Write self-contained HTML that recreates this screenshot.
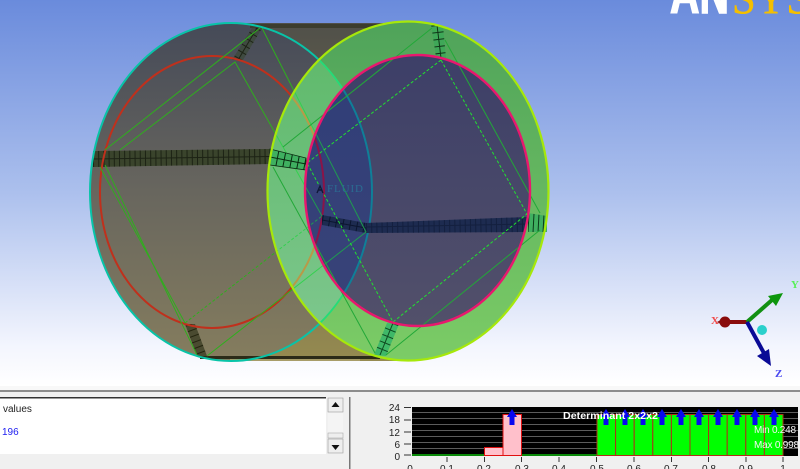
<!DOCTYPE html>
<html><head><meta charset="utf-8"><style>
html,body{margin:0;padding:0;width:800px;height:469px;overflow:hidden;background:#f0f0f0}
svg{display:block}
text{font-family:"Liberation Sans",sans-serif}
</style></head><body>
<svg width="800" height="469" viewBox="0 0 800 469" xmlns="http://www.w3.org/2000/svg">
<defs>
<linearGradient id="bg" x1="0" y1="0" x2="0" y2="1"><stop offset="0" stop-color="#6a8bdc"/><stop offset=".5" stop-color="#acc0ed"/><stop offset=".9" stop-color="#f4f6fe"/><stop offset="1" stop-color="#fff"/></linearGradient>
<linearGradient id="body" x1="0" y1="0" x2="0" y2="1"><stop offset="0" stop-color="#50504a"/><stop offset="1" stop-color="#958a50"/></linearGradient>
<linearGradient id="disc" x1="0" y1="0" x2="0" y2="1"><stop offset="0" stop-color="#454a58"/><stop offset=".5" stop-color="#68665e"/><stop offset="1" stop-color="#857d5e"/></linearGradient>
<linearGradient id="ann" x1="0" y1="0" x2="0" y2="1"><stop offset="0" stop-color="#4fa35a"/><stop offset="1" stop-color="#7ccc66"/></linearGradient>
<linearGradient id="ann2" x1="0" y1="0" x2="0" y2="1"><stop offset="0" stop-color="#5cb868"/><stop offset="1" stop-color="#80c890"/></linearGradient>
<linearGradient id="hole" x1="0" y1="0" x2="0" y2="1"><stop offset="0" stop-color="#3d3f68"/><stop offset="1" stop-color="#52506a"/></linearGradient>
<linearGradient id="hole2" x1="0" y1="0" x2="0" y2="1"><stop offset="0" stop-color="#2f3d78"/><stop offset="1" stop-color="#3a4478"/></linearGradient>
<clipPath id="backc"><ellipse cx="231" cy="192" rx="141" ry="169"/></clipPath>
<clipPath id="holec"><ellipse cx="417.500" cy="190.500" rx="112.500" ry="135.500"/></clipPath>
<clipPath id="annc"><path clip-rule="evenodd" d="M267 191a141 170 0 1 0 282 0a141 170 0 1 0-282 0ZM305 190.500a112.500 135.500 0 1 0 225 0a112.500 135.500 0 1 0-225 0Z"/></clipPath>
<clipPath id="s1"><polygon points="93,151 270,149 270,164 93,167"/></clipPath>
<clipPath id="s2"><polygon points="252,28 262,28 243,60 232,60"/></clipPath>
<clipPath id="s3"><polygon points="185,324 195,324 207,356 197,356"/></clipPath>
<clipPath id="s4"><polygon points="270,149 306,158 306,170 270,165"/></clipPath>
<clipPath id="s5"><polygon points="431,24 443,26 446,58 436,57"/></clipPath>
<clipPath id="s6"><polygon points="387,323 399,324 386,356 374,355"/></clipPath>
<clipPath id="s7"><polygon points="528,213 547,216 547,232 528,232"/></clipPath>
<clipPath id="s8"><polygon points="322,215 366,223 527,217 527,232 366,233 322,225"/></clipPath>
<g id="bd" fill="none">
<polyline points="105,150 260,28"/><polyline points="262,28 366,232 207,356"/><polyline points="105,165 197,355"/>
<polyline points="120,150 235,62 322,216"/><polyline points="100,167 185,323"/>
</g>
<g id="bdd" fill="none" stroke-dasharray="3 2"><polyline points="185,323 322,216"/></g>
<ellipse id="re" cx="212" cy="192" rx="112" ry="136" fill="none"/>
<ellipse id="te" cx="231" cy="192" rx="141" ry="169" fill="none"/>
</defs>
<rect width="800" height="386" fill="url(#bg)"/>
<!-- logo -->
<text x="670" y="13" font-size="58" font-weight="bold" fill="#fff" stroke="#fff" stroke-width="1.500" textLength="59" lengthAdjust="spacingAndGlyphs">AN</text>
<text x="732" y="13" font-size="44" fill="#f4bf00" stroke="#f4bf00" stroke-width=".5" style="font-family:'Liberation Serif',serif" textLength="78" lengthAdjust="spacingAndGlyphs">SYS</text>
<!-- cylinder body -->
<rect x="231" y="23" width="177" height="338" fill="url(#body)"/>
<ellipse cx="231" cy="192" rx="141" ry="169" fill="url(#disc)"/>
<rect x="250" y="24" width="145" height="4" fill="#3c3d2e"/>
<rect x="200" y="356" width="180" height="3" fill="#2c2b18"/>
<rect x="230" y="359" width="130" height="2" fill="#a79c68"/>
<!-- back strips -->
<g clip-path="url(#s1)"><rect x="90" y="145" width="185" height="25" fill="#3a442c"/>
<line x1="93" y1="159" x2="270" y2="157" stroke="#1d2315" stroke-width="20" stroke-dasharray="1 4.200"/>
<line x1="93" y1="159" x2="270" y2="156.500" stroke="#1d2315" stroke-width="1"/></g>
<g clip-path="url(#s2)"><rect x="225" y="25" width="40" height="40" fill="#3f4a40"/>
<line x1="257" y1="28" x2="238" y2="60" stroke="#1d2315" stroke-width="1"/>
<line x1="257" y1="28" x2="238" y2="60" stroke="#1d2315" stroke-width="18" stroke-dasharray="1 6"/></g>
<g clip-path="url(#s3)"><rect x="180" y="320" width="30" height="40" fill="#4a4a30"/>
<line x1="190" y1="324" x2="202" y2="356" stroke="#25250f" stroke-width="18" stroke-dasharray="1 5"/></g>
<!-- back ellipses and lines -->
<use href="#re" stroke="#c0301c" stroke-width="2"/>
<use href="#bd" stroke="#2fae1e" stroke-width="1"/>
<use href="#bdd" stroke="#2fae1e" stroke-width="1"/>
<use href="#te" stroke="#08c4a8" stroke-width="2"/>
<!-- front annulus -->
<ellipse cx="408" cy="191" rx="141" ry="170" fill="url(#ann)"/>
<g clip-path="url(#backc)"><ellipse cx="408" cy="191" rx="141" ry="170" fill="url(#ann2)"/></g>
<!-- hole -->
<ellipse cx="417.500" cy="190.500" rx="112.500" ry="135.500" fill="url(#hole)"/>
<g clip-path="url(#holec)">
<ellipse cx="231" cy="192" rx="141" ry="169" fill="url(#hole2)"/>
<use href="#te" stroke="#0f7f98" stroke-width="2"/>
<use href="#re" stroke="#8a1448" stroke-width="2"/>
<g clip-path="url(#s8)"><rect x="320" y="210" width="210" height="28" fill="#1d2b50"/>
<line x1="322" y1="220" x2="366" y2="228" stroke="#0c1630" stroke-width="22" stroke-dasharray="1 6"/>
<line x1="366" y1="227" x2="527" y2="224" stroke="#14203f" stroke-width="22" stroke-dasharray="1 4.200"/>
<line x1="322" y1="220" x2="366" y2="228" stroke="#0c1630"/><line x1="366" y1="227" x2="527" y2="224" stroke="#14203f"/></g>
<use href="#bd" stroke="#1f9a50" stroke-width="1"/>
<use href="#bdd" stroke="#1f9a50" stroke-width="1"/>
</g>
<!-- back geometry through annulus -->
<g clip-path="url(#annc)">
<use href="#re" stroke="#b89a48" stroke-width="2"/>
<use href="#te" stroke="#24dc78" stroke-width="1.800"/>
<use href="#bd" stroke="#35d050" stroke-width="1"/>
<use href="#bdd" stroke="#35d050" stroke-width="1"/>
</g>
<!-- front strips -->
<g clip-path="url(#s4)"><rect x="265" y="145" width="45" height="30" fill="#3fb060"/>
<line x1="270" y1="157" x2="306" y2="164" stroke="#0a2a10" stroke-width="1"/>
<line x1="270" y1="157" x2="306" y2="164" stroke="#0a2a10" stroke-width="24" stroke-dasharray="1 6"/></g>
<polygon points="270,149 306,158 306,170 270,165" fill="none" stroke="#0a2a10" stroke-width=".8"/>
<g clip-path="url(#s5)"><rect x="425" y="20" width="25" height="42" fill="#3fa858"/>
<line x1="437" y1="25" x2="441" y2="58" stroke="#0f3316" stroke-width="1"/>
<line x1="437" y1="25" x2="441" y2="58" stroke="#0f3316" stroke-width="20" stroke-dasharray="1 6"/></g>
<g clip-path="url(#s6)"><rect x="370" y="320" width="32" height="40" fill="#3fb868"/>
<line x1="393" y1="323" x2="380" y2="355" stroke="#0f4a20" stroke-width="1"/>
<line x1="393" y1="323" x2="380" y2="355" stroke="#0f4a20" stroke-width="20" stroke-dasharray="1 6"/></g>
<g clip-path="url(#s7)"><rect x="525" y="210" width="25" height="25" fill="#3fb060"/>
<line x1="528" y1="223" x2="547" y2="224" stroke="#0a3a18" stroke-width="22" stroke-dasharray="1 4"/></g>
<!-- front lines -->
<g fill="none" stroke="#22a838" stroke-width="1">
<polyline points="432,28 283,147"/><polyline points="273,167 375,353"/><polyline points="386,355 540,230"/><polyline points="445,40 540,213"/>
</g>
<g fill="none" stroke="#22e030" stroke-width="1" stroke-dasharray="3 2">
<polygon points="441,60 307,163 393,322 527,214"/>
</g>
<!-- rims -->
<ellipse cx="417.500" cy="190.500" rx="112.500" ry="135.500" fill="none" stroke="#e8186e" stroke-width="2.400"/>
<ellipse cx="408" cy="191" rx="140.500" ry="169.500" fill="none" stroke="#a6e80a" stroke-width="2.200"/>
<!-- FLUID -->
<text x="327" y="192" font-size="11" fill="#2a6c92" style="font-family:'Liberation Serif',serif" textLength="36">FLUID</text>
<path d="M317 193 L320 186 L323 193 M318 190 L322 190" stroke="#101838" stroke-width="1.400" fill="none"/>
<!-- triad -->
<line x1="747" y1="322" x2="725" y2="322" stroke="#8a0c0c" stroke-width="4"/>
<circle cx="725" cy="322" r="5.500" fill="#8a0c0c"/><polygon points="717,322 726,317 726,327" fill="#8a0c0c"/>
<line x1="747" y1="322" x2="772" y2="300" stroke="#129012" stroke-width="4"/>
<polygon points="783,293 768,296 776,306" fill="#0d960d"/>
<line x1="747" y1="322" x2="765" y2="355" stroke="#0a0a96" stroke-width="4"/>
<polygon points="771,366 757,356 769,349" fill="#0a0a96"/>
<circle cx="762" cy="330" r="5" fill="#2bd0cc"/>
<text x="711" y="324" font-size="11" font-weight="bold" fill="#f04a4a" style="font-family:'Liberation Serif',serif">X</text>
<text x="791" y="288" font-size="11" font-weight="bold" fill="#58f058" style="font-family:'Liberation Serif',serif">Y</text>
<text x="775" y="377" font-size="11" font-weight="bold" fill="#4a4af0" style="font-family:'Liberation Serif',serif">Z</text>
<!-- bottom panel -->
<rect y="386" width="800" height="83" fill="#f0f0f0"/>
<rect y="386" width="800" height="4" fill="#f8f8f8"/>
<rect y="390" width="800" height="2" fill="#8c8c8c"/>
<rect y="397" width="326" height="57" fill="#fff"/>
<rect y="397" width="326" height="1.500" fill="#333"/>
<text x="3" y="412" font-size="10" fill="#222">values</text>
<text x="2" y="435" font-size="10" fill="#1c1cf0">196</text>
<rect x="328" y="397" width="15" height="57" fill="#f4f4f4"/>
<rect x="328" y="398" width="15" height="14" fill="#eee" stroke="#999" stroke-width=".6"/>
<polygon points="335.500,402 331.500,407 339.500,407" fill="#111"/>
<rect x="328" y="433" width="15" height="5" fill="#eee" stroke="#aaa" stroke-width=".6"/>
<rect x="328" y="439" width="15" height="14" fill="#eee" stroke="#999" stroke-width=".6"/>
<polygon points="331.500,445 339.500,445 335.500,450" fill="#111"/>
<rect x="349" y="397" width="1.500" height="72" fill="#777"/>
<g font-size="10" fill="#222" text-anchor="end">
<text x="400" y="411">24</text><text x="400" y="423">18</text><text x="400" y="436">12</text><text x="400" y="448">6</text><text x="400" y="460">0</text>
</g>
<g stroke="#333" stroke-width="1">
<line x1="404" y1="407.500" x2="411" y2="407.500"/><line x1="404" y1="420" x2="411" y2="420"/><line x1="404" y1="432" x2="411" y2="432"/><line x1="404" y1="444" x2="411" y2="444"/><line x1="404" y1="455" x2="411" y2="455"/>
</g>
<!-- histogram -->
<rect x="412" y="407" width="386" height="49" fill="#000"/>
<g stroke="#5c5c5c" stroke-width="1">
<line x1="412" y1="412.500" x2="798" y2="412.500"/><line x1="412" y1="418.500" x2="798" y2="418.500"/><line x1="412" y1="424.500" x2="798" y2="424.500"/><line x1="412" y1="430.500" x2="798" y2="430.500"/><line x1="412" y1="436.500" x2="798" y2="436.500"/><line x1="412" y1="442.500" x2="798" y2="442.500"/><line x1="412" y1="448.500" x2="798" y2="448.500"/>
</g>
<rect x="412" y="454" width="186" height="2" fill="#0a8a0a"/>
<g stroke="#e01010" stroke-width="1">
<rect x="484.500" y="447.500" width="18.500" height="8" fill="#ffc0cb"/>
<rect x="503" y="414.500" width="18.500" height="41" fill="#ffc0cb"/>
</g>
<g stroke="#b03018" stroke-width="1" fill="#00ff00">
<rect x="597.000" y="414.500" width="18.600" height="41"/><rect x="615.600" y="414.500" width="18.600" height="41"/><rect x="634.200" y="414.500" width="18.600" height="41"/><rect x="652.800" y="414.500" width="18.600" height="41"/><rect x="671.400" y="414.500" width="18.600" height="41"/><rect x="690.000" y="414.500" width="18.600" height="41"/><rect x="708.600" y="414.500" width="18.600" height="41"/><rect x="727.200" y="414.500" width="18.600" height="41"/><rect x="745.800" y="414.500" width="18.600" height="41"/><rect x="764.400" y="414.500" width="18.600" height="41"/>
</g>
<g fill="#0808f0">
<path d="M512 409 l5 8 h-2.500 v8 h-5 v-8 h-2.500 z"/>
<path d="M606 409 l5 8 h-2.500 v8 h-5 v-8 h-2.500 z"/><path d="M625 409 l5 8 h-2.500 v8 h-5 v-8 h-2.500 z"/><path d="M643 409 l5 8 h-2.500 v8 h-5 v-8 h-2.500 z"/><path d="M662 409 l5 8 h-2.500 v8 h-5 v-8 h-2.500 z"/><path d="M681 409 l5 8 h-2.500 v8 h-5 v-8 h-2.500 z"/><path d="M699 409 l5 8 h-2.500 v8 h-5 v-8 h-2.500 z"/><path d="M718 409 l5 8 h-2.500 v8 h-5 v-8 h-2.500 z"/><path d="M737 409 l5 8 h-2.500 v8 h-5 v-8 h-2.500 z"/><path d="M755 409 l5 8 h-2.500 v8 h-5 v-8 h-2.500 z"/><path d="M774 409 l5 8 h-2.500 v8 h-5 v-8 h-2.500 z"/>
</g>
<text x="563" y="419" font-size="10" font-weight="bold" fill="#fff" textLength="95" lengthAdjust="spacingAndGlyphs">Determinant 2x2x2</text>
<text x="754" y="433" font-size="10" fill="#f4f4f4" textLength="42">Min 0.248</text>
<text x="754" y="448" font-size="10" fill="#f4f4f4" textLength="45">Max 0.998</text>
<!-- x axis -->
<g stroke="#333" stroke-width="1">
<line x1="447" y1="457" x2="447" y2="462"/><line x1="484.500" y1="457" x2="484.500" y2="462"/><line x1="521.500" y1="457" x2="521.500" y2="462"/><line x1="559" y1="457" x2="559" y2="462"/><line x1="596.500" y1="457" x2="596.500" y2="462"/><line x1="634" y1="457" x2="634" y2="462"/><line x1="671.500" y1="457" x2="671.500" y2="462"/><line x1="708.500" y1="457" x2="708.500" y2="462"/><line x1="746" y1="457" x2="746" y2="462"/><line x1="783" y1="457" x2="783" y2="462"/>
</g>
<g font-size="10" fill="#222" text-anchor="middle">
<text x="410" y="472">0</text><text x="447" y="472">0.1</text><text x="484" y="472">0.2</text><text x="522" y="472">0.3</text><text x="559" y="472">0.4</text><text x="597" y="472">0.5</text><text x="634" y="472">0.6</text><text x="671" y="472">0.7</text><text x="709" y="472">0.8</text><text x="746" y="472">0.9</text><text x="783" y="472">1</text>
</g>
</svg>
</body></html>
